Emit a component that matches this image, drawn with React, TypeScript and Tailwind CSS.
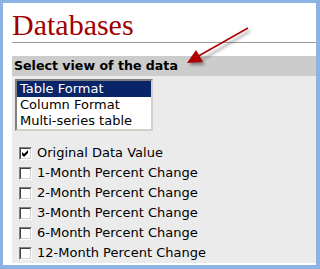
import React from 'react';

const options = ['Table Format', 'Column Format', 'Multi-series table'];
const checks = [
  { label: 'Original Data Value', checked: true },
  { label: '1-Month Percent Change', checked: false },
  { label: '2-Month Percent Change', checked: false },
  { label: '3-Month Percent Change', checked: false },
  { label: '6-Month Percent Change', checked: false },
  { label: '12-Month Percent Change', checked: false },
];

function Box({ checked }: { checked: boolean }) {
  return (
    <span className="w-[13px] h-[13px] shrink-0 border border-t-[#808080] border-l-[#808080] border-r-white border-b-white">
      <span className="w-full h-full bg-white border border-t-[#404040] border-l-[#404040] border-r-[#d4d0c8] border-b-[#d4d0c8] flex items-center justify-center">
        {checked && (
          <svg width="7" height="7" viewBox="0 0 7 7">
            <path d="M0 2 L2 4 L6 0 L6 3 L2 7 L0 5 Z" fill="#000" />
          </svg>
        )}
      </span>
    </span>
  );
}

export default function App() {
  return (
    <div className="w-[320px] h-[269px] bg-[#8db3e2] pt-[3px] pl-[3px] pr-[4px] pb-[4px] font-['DejaVu_Sans',sans-serif]">
      <div className="relative h-full bg-white pl-[9px] pb-[4px] flex flex-col">
        <h1 className="h-[41px] pt-[5px] font-['Liberation_Serif',serif] text-[30px] leading-[34px] text-[#a00000] border-b border-[#999999]">
          Databases
        </h1>
        <div className="mt-[13px] h-[20px] bg-[#cccccc] pl-[2px] text-[12.6px] font-bold leading-[20px] text-black">
          Select view of the data
        </div>
        <div className="flex-1 bg-[#ebebeb] pl-[3px] pt-[3px]">
          <div className="w-[138px] h-[52px] bg-white border-2 border-t-[#808080] border-l-[#808080] border-r-[#d4d0c8] border-b-[#d4d0c8] text-[13px] leading-[16px] text-black">
            {options.map((o, i) => (
              <div key={o} className={i === 0 ? 'bg-[#0a246a] text-white pl-[3px]' : 'pl-[3px]'}>
                {o}
              </div>
            ))}
          </div>
          <div className="mt-[12px] pl-[4px] flex flex-col text-[13px] leading-[20px] text-black">
            {checks.map((c) => (
              <label key={c.label} className="flex items-center gap-[5px] h-[20px]">
                <Box checked={c.checked} />
                <span>{c.label}</span>
              </label>
            ))}
          </div>
        </div>
        <svg className="absolute left-0 top-0 pointer-events-none" width="313" height="262" viewBox="0 0 313 262">
          <defs>
            <filter id="sh" x="-50%" y="-50%" width="200%" height="200%">
              <feGaussianBlur stdDeviation="1.5" />
            </filter>
          </defs>
          <g opacity="0.5" filter="url(#sh)" transform="translate(2,3)">
            <line x1="245" y1="25" x2="195" y2="55" stroke="#333" strokeWidth="1.5" />
            <path d="M184 59 L193 47 L200 59 Z" fill="#333" />
          </g>
          <line x1="245" y1="25" x2="192" y2="55" stroke="#b00000" strokeWidth="1.5" />
          <path d="M184 60 L193 47 L200 59 Z" fill="#b00000" />
        </svg>
      </div>
    </div>
  );
}
